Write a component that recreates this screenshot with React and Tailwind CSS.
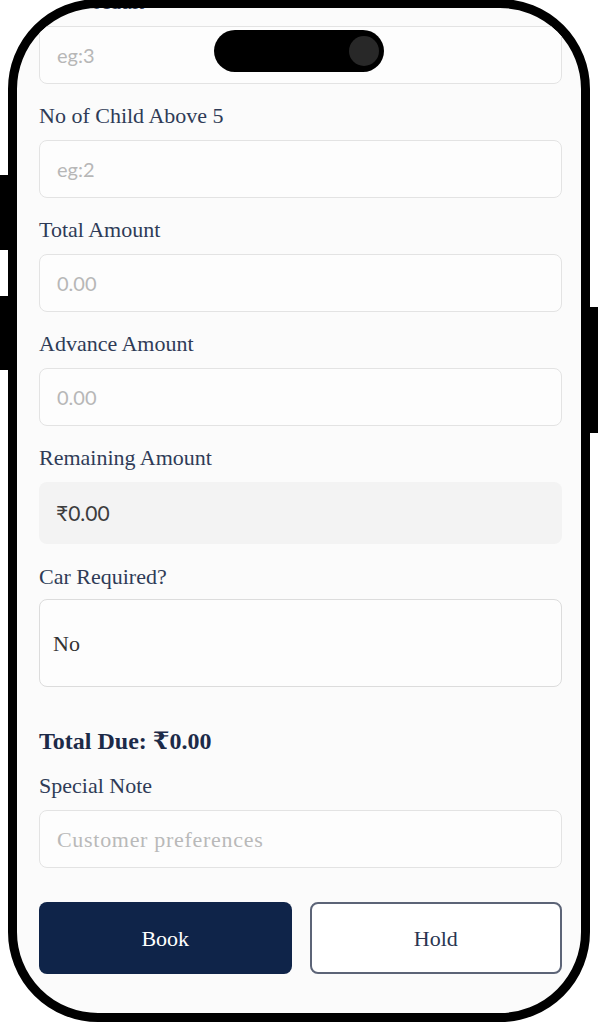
import React from 'react'

const serif = { fontFamily: '"Liberation Serif", "DejaVu Serif", serif' }

function Label({ children }) {
  return (
    <p className="text-[22px] leading-[24px] text-[#2f3b57]" style={serif}>
      {children}
    </p>
  )
}

function Field({ label, placeholder, first }) {
  return (
    <div className={first ? '' : 'mt-[20px]'}>
      <Label>{label}</Label>
      <div className="mt-[12px] h-[58px] rounded-[8px] border-[1.5px] border-[#e3e3e3] bg-[#fdfdfd] flex items-center px-[17px]">
        <span className="font-['Lato',sans-serif] text-[20px] text-[#b7b7b7]">{placeholder}</span>
      </div>
    </div>
  )
}

export default function App() {
  return (
    <div className="relative w-[598px] h-[1024px] bg-white overflow-hidden">
      {/* side buttons */}
      <div className="absolute left-0 top-[175px] w-[12px] h-[75px] bg-black" />
      <div className="absolute left-0 top-[296px] w-[12px] h-[74px] bg-black" />
      <div className="absolute right-0 top-[307px] w-[12px] h-[126px] bg-black" />

      <div className="absolute left-[8px] top-[-1px] w-[582px] h-[1023px] rounded-[90px] border-[9px] border-black bg-[#fbfbfb] overflow-hidden">
        <div className="absolute left-[197px] top-[22px] w-[170px] h-[42px] rounded-full bg-black flex items-center justify-end pr-[5px]">
          <div className="w-[30px] h-[30px] rounded-full bg-[#282828]" />
        </div>

        <div className="pl-[22px] pr-[19px] mt-[-18px]">
          <Field first label="No of Adult" placeholder="eg:3" />
          <Field label="No of Child Above 5" placeholder="eg:2" />
          <Field label="Total Amount" placeholder="0.00" />
          <Field label="Advance Amount" placeholder="0.00" />

          <div className="mt-[20px]">
            <Label>Remaining Amount</Label>
            <div className="mt-[12px] h-[62px] rounded-[8px] bg-[#f3f3f3] flex items-center px-[17px]">
              <span className="font-['Lato',sans-serif] text-[21px] text-[#3d3d3d]">₹0.00</span>
            </div>
          </div>

          <div className="mt-[21px]">
            <Label>Car Required?</Label>
            <div className="mt-[10px] h-[88px] rounded-[8px] border-[1.5px] border-[#dcdcdc] bg-[#fdfdfd] flex items-center px-[13px]">
              <span className="text-[22px] text-[#333]" style={serif}>No</span>
            </div>
          </div>

          <p className="mt-[38px] text-[24px] leading-[32px] font-semibold text-[#1c2a48]" style={serif}>
            Total Due: ₹0.00
          </p>

          <div className="mt-[17px]">
            <Label>Special Note</Label>
            <div className="mt-[12px] h-[58px] rounded-[8px] border-[1.5px] border-[#e3e3e3] bg-[#fdfdfd] flex items-center px-[17px]">
              <span className="text-[22px] tracking-[0.7px] text-[#b9b9b9]" style={serif}>Customer preferences</span>
            </div>
          </div>

          <div className="mt-[34px] grid grid-cols-2 gap-[18px]">
            <button className="h-[72px] rounded-[8px] bg-[#0f2449] text-white text-[22px]" style={serif}>
              Book
            </button>
            <button className="h-[72px] rounded-[8px] border-2 border-[#5c6477] bg-white text-[#2a3550] text-[22px]" style={serif}>
              Hold
            </button>
          </div>
        </div>
      </div>
    </div>
  )
}
